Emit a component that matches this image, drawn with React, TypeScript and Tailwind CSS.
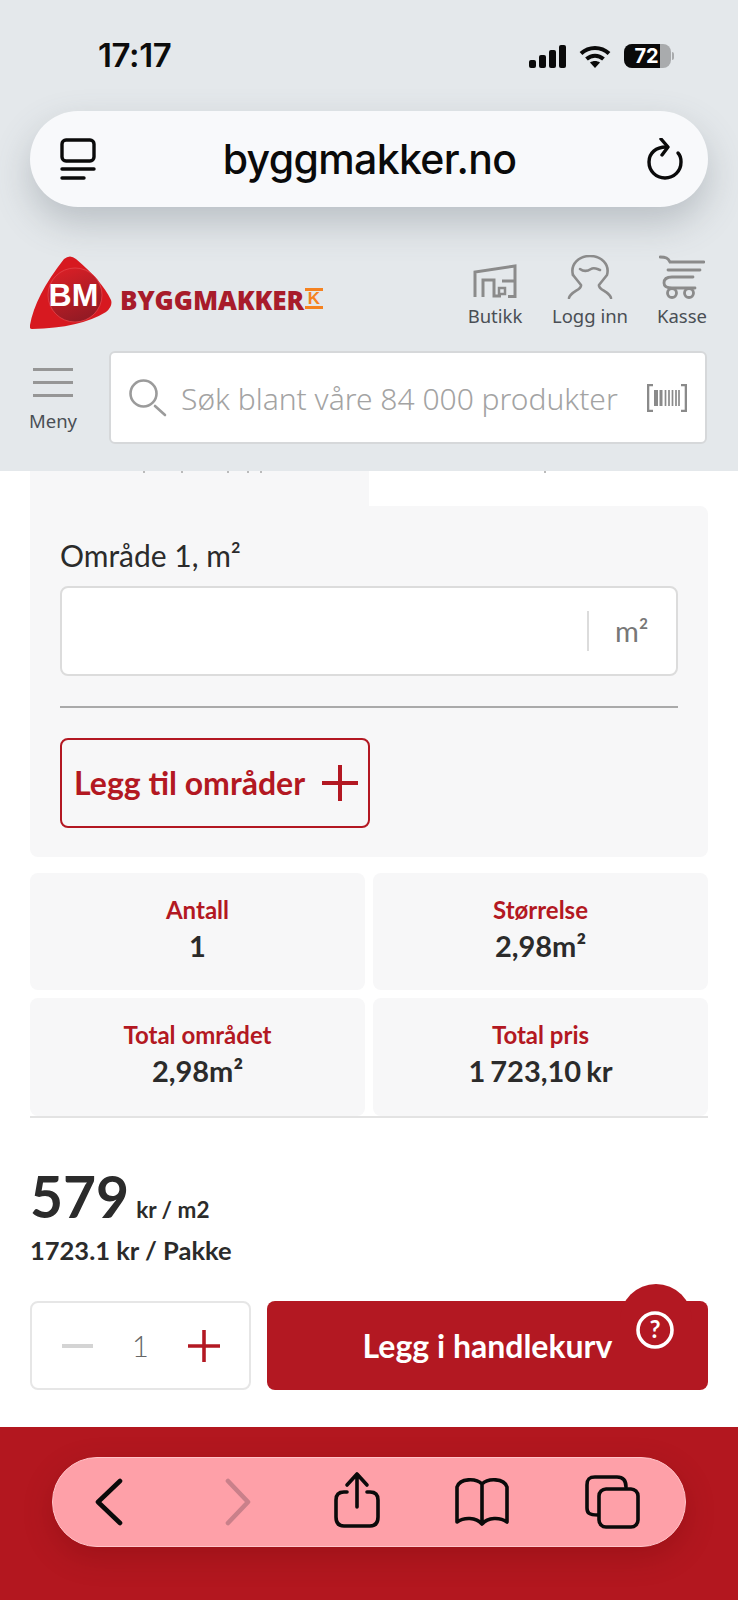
import { ReactNode } from "react"

const brand = "font-['Lato','Noto_Sans',sans-serif]"
const soft = "font-['Noto_Sans','Open_Sans',sans-serif]"

function Logo() {
  return (
    <svg width="84" height="74" viewBox="0 0 84 74" className="shrink-0">
      <defs>
        <linearGradient id="inner" x1="0.3" y1="0" x2="0.7" y2="1">
          <stop offset="0" stopColor="#d81f26" />
          <stop offset="1" stopColor="#8f1a24" />
        </linearGradient>
      </defs>
      <path d="M34 3 Q40 -2 46 3 Q72 25 81 44 Q83 50 76 56 Q50 72 2 73 Q-1 73 0 69 Q5 40 34 3 Z" fill="#d71920" />
      <circle cx="45" cy="39" r="27" fill="url(#inner)" stroke="#e2444a" strokeWidth="0.8" />
      <text x="43.5" y="50" textAnchor="middle" fill="#fff" fontFamily="Liberation Sans, sans-serif" fontWeight="700" fontSize="32">
        BM
      </text>
    </svg>
  )
}

function ShopIcon() {
  return (
    <svg width="44" height="36" viewBox="0 0 44 36" fill="none" stroke="#8b8b8b" strokeWidth="3">
      <path d="M2 34V9L42 3V33.5H35" />
      <path d="M10 34V17H21V33H28" />
      <path d="M29 18H41" />
      <rect x="26" y="25" width="6" height="6" strokeWidth="2.5" />
    </svg>
  )
}

function UserIcon() {
  return (
    <svg width="46" height="44" viewBox="0 0 46 44" fill="none" stroke="#8b8b8b" strokeWidth="2.6" strokeLinecap="round" strokeLinejoin="round">
      <path d="M6 20 C3 9 12 1 23 1 C34 1 43 9 40 20 L32 30 C31 35 42 36 44 43" />
      <path d="M6 20 L14 30 C15 35 4 36 2 43" />
      <path d="M13 14 C17 17 21 16 24 14 C27 12 30 14 33 15" />
    </svg>
  )
}

function CartIcon() {
  return (
    <svg width="46" height="44" viewBox="0 0 46 44" fill="none" stroke="#8b8b8b" strokeWidth="2.8" strokeLinecap="round">
      <path d="M1 2 C7 2 9 3 11 7 H45" />
      <path d="M9 15 H41" />
      <path d="M34 22 H13 C7 22 5 25 5 28 C5 31 8 33 13 33 H36" />
      <circle cx="13" cy="38" r="4.5" />
      <circle cx="30" cy="38" r="4.5" />
    </svg>
  )
}

function NavItem({ icon, label, className }: { icon: ReactNode; label: string; className: string }) {
  return (
    <div className={`flex flex-col items-center ${className}`}>
      <div className="h-[44px] flex items-end justify-center">{icon}</div>
      <span className={`mt-[4px] text-[18.5px] leading-[26px] text-[#4a4f55] whitespace-nowrap ${soft}`}>{label}</span>
    </div>
  )
}

function StatCard({ label, value }: { label: string; value: string }) {
  return (
    <div className={`bg-[#f7f7f8] rounded-lg flex flex-col items-center pt-[23px] ${brand}`}>
      <span className="text-[24px] leading-[28px] font-bold text-[#b31822]">{label}</span>
      <span className="mt-[3px] text-[29px] leading-[38px] font-bold text-[#2b2b2b] [word-spacing:-2px]">{value}</span>
    </div>
  )
}

function PlusIcon({ size }: { size: number }) {
  return (
    <svg width={size} height={size} viewBox="0 0 36 36" stroke="#b31822" strokeWidth="4">
      <path d="M0 18H36M18 0V36" />
    </svg>
  )
}

export default function App() {
  return (
    <div className="relative w-[738px] h-[1600px] bg-white overflow-hidden flex flex-col">
      {/* Browser chrome + site header */}
      <header className="relative z-10 h-[471px] shrink-0 bg-[#e4e8eb] flex flex-col">
        <div className="h-[111px] shrink-0 pl-[98px] pr-[64px] pt-[35px] flex items-start justify-between">
          <span className="text-[33px] leading-[40px] font-semibold text-[#0c0c0c] font-['Inter',sans-serif] tracking-[-0.4px]">17:17</span>
          <div className="flex items-center gap-[13px] pt-[9px]">
            <svg width="37" height="23" viewBox="0 0 37 23" fill="#0a0a0a">
              <rect x="0" y="15" width="7" height="8" rx="2" />
              <rect x="10" y="10" width="7" height="13" rx="2" />
              <rect x="20" y="5" width="7" height="18" rx="2" />
              <rect x="30" y="0" width="7" height="23" rx="2" />
            </svg>
            <svg width="32" height="23" viewBox="0 0 32 23" fill="none" stroke="#0a0a0a" strokeWidth="4">
              <path d="M2 8.5 C10 1 22 1 30 8.5" />
              <path d="M7.5 14 C12.5 9.5 19.5 9.5 24.5 14" />
              <path d="M16 23 L11 17.5 C14 15.5 18 15.5 21 17.5 Z" fill="#0a0a0a" stroke="none" />
            </svg>
            <div className="flex items-center gap-[1px]">
              <div className="relative w-[47px] h-[24px] rounded-[8px] bg-[#a9abad] overflow-hidden">
                <div className="w-[36px] h-full bg-[#0a0a0a]" />
                <span className="absolute inset-0 flex items-center justify-center pr-[2px] text-[20px] font-bold text-white font-['Inter',sans-serif]">72</span>
              </div>
              <div className="w-[2px] h-[8px] rounded-r bg-[#a9abad]" />
            </div>
          </div>
        </div>

        <div className="mx-[30px] h-[96px] shrink-0 rounded-[48px] bg-[#f8f9fb] shadow-[0_16px_36px_rgba(90,100,110,0.3)] flex items-center justify-between pl-[30px] pr-[25px]">
          <svg width="36" height="42" viewBox="0 0 36 42" fill="none" stroke="#0a0a0a" strokeWidth="3.4" strokeLinecap="round">
            <rect x="2" y="2" width="32" height="21" rx="4" />
            <path d="M2 31H34" />
            <path d="M2 40H24" />
          </svg>
          <span className="-ml-[4px] text-[41px] leading-[50px] text-[#0a0a0a] font-['Inter',sans-serif] font-medium tracking-[-0.65px]">byggmakker.no</span>
          <svg width="36" height="42" viewBox="0 0 36 42" fill="none" stroke="#0a0a0a" strokeWidth="3.4" strokeLinecap="round" strokeLinejoin="round">
            <path d="M19 9 C9 9 2 15 2 24 C2 33 9 40 18 40 C27 40 34 33 34 24 C34 20 33 17 31 15" />
            <path d="M14 1 L21 9 L15 17" />
          </svg>
        </div>

        <div className="mt-[49px] pl-[30px] pr-[31px] flex items-start">
          <Logo />
          <div className="ml-[6px] mt-[26px] flex items-start">
            <span className="text-[26px] leading-[36px] font-extrabold text-[#a81c2b] tracking-[-0.1px] font-['Open_Sans',sans-serif] whitespace-nowrap">BYGGMAKKER</span>
            <div className="ml-[1px] mt-[6px] w-[18px] h-[21px] border-y-[3px] border-[#f58220] flex items-center justify-center">
              <span className="text-[17px] leading-[15px] font-bold text-[#f58220] font-['Liberation_Sans',sans-serif]">K</span>
            </div>
          </div>
          <div className="flex-1" />
          <div className="flex items-start -mt-[1px]">
            <NavItem icon={<ShopIcon />} label="Butikk" className="w-[56px]" />
            <NavItem icon={<UserIcon />} label="Logg inn" className="w-[74px] ml-[30px]" />
            <NavItem icon={<CartIcon />} label="Kasse" className="w-[50px] ml-[30px]" />
          </div>
        </div>

        <div className="mt-[21px] pl-[30px] pr-[31px] flex items-start">
          <div className="w-[46px] pt-[17px] flex flex-col items-center">
            <div className="w-[40px] flex flex-col gap-[10.5px]">
              <div className="h-[2.5px] bg-[#969696]" />
              <div className="h-[2.5px] bg-[#969696]" />
              <div className="h-[2.5px] bg-[#969696]" />
            </div>
            <span className={`mt-[11px] text-[18.5px] leading-[26px] text-[#4a4f55] ${soft}`}>Meny</span>
          </div>
          <div className="ml-[33px] flex-1 h-[93px] rounded-[6px] bg-white border-2 border-[#d6d8da] flex items-center pl-[18px] pr-[18px]">
            <svg width="38" height="38" viewBox="0 0 38 38" fill="none" stroke="#9b9b9b" strokeWidth="2.6" strokeLinecap="round">
              <circle cx="14.5" cy="14.5" r="13" />
              <path d="M26 27 L36 36" />
            </svg>
            <span className={`ml-[14px] pt-[2px] flex-1 text-[30px] leading-[40px] font-light text-[#a3a3a3] whitespace-nowrap ${soft}`}>Søk blant våre 84 000 produkter</span>
            <svg width="40" height="28" viewBox="0 0 40 28" fill="none" stroke="#8a8a8a">
              <path d="M6 1H1V27H6M34 1H39V27H34" strokeWidth="2.6" />
              <path d="M9 6V22" strokeWidth="4" />
              <path d="M14 6V22" strokeWidth="3" />
              <path d="M18.5 6V22M22 6V22M25.5 6V22M29 6V22M32 6V22" strokeWidth="1.7" />
            </svg>
          </div>
        </div>
      </header>

      {/* Calculator, scrolled up behind the header */}
      <main className="flex-1 flex flex-col">
        <div className="relative mx-[30px] w-[339px] h-[35px] shrink-0 bg-[#f7f7f8]">
          {/* descenders of the tab labels poking out below the header */}
          <span className="absolute left-[113px] top-0 w-[2px] h-[2px] bg-[#bbb]" />
          <span className="absolute left-[151px] top-0 w-[2px] h-[2px] bg-[#bbb]" />
          <span className="absolute left-[197px] top-0 w-[2px] h-[2px] bg-[#bbb]" />
          <span className="absolute left-[217px] top-0 w-[2px] h-[2px] bg-[#bbb]" />
          <span className="absolute left-[230px] top-0 w-[2px] h-[2px] bg-[#bbb]" />
          <span className="absolute left-[514px] top-0 w-[2px] h-[2px] bg-[#bbb]" />
        </div>
        <section className="mx-[30px] h-[351px] shrink-0 rounded-b-lg rounded-tr-lg bg-[#f7f7f8] px-[30px] pt-[30px]">
          <label className={`block text-[30px] leading-[38px] text-[#2b2b2b] ${brand}`}>Område 1, m²</label>
          <div className="mt-[12px] h-[90px] rounded-lg bg-white border-2 border-[#dcdcdc] flex items-center justify-end">
            <div className="w-[2px] h-[40px] bg-[#dcdcdc]" />
            <span className={`w-[87px] pl-[26px] text-[29px] leading-[36px] text-[#777] ${brand}`}>m²</span>
          </div>
          <div className="mt-[30px] h-[2px] bg-[#aaa]" />
          <button className={`mt-[30px] w-[310px] h-[90px] rounded-lg border-2 border-[#b31822] pl-[12px] flex items-center text-[32px] font-bold text-[#b31822] ${brand}`}>
            <span className="w-[248px] text-left whitespace-nowrap">Legg til områder</span>
            <PlusIcon size={36} />
          </button>
        </section>

        <div className="mx-[30px] mt-[16px] grid grid-cols-2 grid-rows-[117px_118px] gap-x-[8px] gap-y-[8px] shrink-0">
          <StatCard label="Antall" value="1" />
          <StatCard label="Størrelse" value="2,98m²" />
          <StatCard label="Total området" value="2,98m²" />
          <StatCard label="Total pris" value="1 723,10 kr" />
        </div>
        <div className="mx-[30px] h-[2px] bg-[#e3e3e3] shrink-0" />

        <div className={`px-[30px] pt-[42px] shrink-0 ${brand}`}>
          <div className="flex items-baseline">
            <span className="text-[57px] leading-[72px] font-bold text-[#2b2b2b]">579</span>
            <span className="ml-[7px] text-[22.5px] font-bold text-[#2b2b2b]">kr / m2</span>
          </div>
          <div className="mt-[2px] text-[25.5px] leading-[32px] font-bold text-[#2b2b2b]">1723.1 kr / Pakke</div>
        </div>

        <div className="mt-[35px] px-[30px] flex gap-[16px] shrink-0">
          <div className="w-[221px] h-[89px] rounded-lg border-2 border-[#e6e6e6] flex items-center pl-[30px] pr-[29px] justify-between">
            <div className="w-[31px] h-[4px] bg-[#d4d4d4]" />
            <span className={`text-[29px] text-[#666] font-light ${brand}`}>1</span>
            <PlusIcon size={32} />
          </div>
          <button className={`relative flex-1 h-[89px] rounded-lg bg-[#b31822] text-[32px] font-bold text-white ${brand}`}>
            <span className="absolute left-[353px] -top-[17px] w-[72px] h-[40px] rounded-t-full bg-[#b31822]" />
            <span className="relative">Legg i handlekurv</span>
            <svg width="38" height="38" viewBox="0 0 38 38" fill="none" className="absolute left-[369px] top-[10px]">
              <circle cx="19" cy="19" r="17" stroke="#fff" strokeWidth="3.6" />
              <text x="19" y="27" textAnchor="middle" fill="#fff" fontFamily="Lato, sans-serif" fontWeight="700" fontSize="24">?</text>
            </svg>
          </button>
        </div>
      </main>

      {/* Safari bottom toolbar */}
      <footer className="h-[173px] shrink-0 bg-[#b3171f] pt-[30px] px-[52px]">
        <div className="h-[90px] rounded-[45px] bg-[#fea0a8] border border-[#ffc4c9] shadow-[0_10px_30px_rgba(80,0,5,0.22)] relative">
          <svg width="633" height="90" viewBox="0 0 633 90" fill="none" stroke="#0a0a0a" strokeWidth="4" strokeLinecap="round" strokeLinejoin="round" className="absolute -left-px -top-px">
            <path d="M68 24 L46 45 L68 66" strokeWidth="4.6" />
            <path d="M176 24 L196 45 L176 66" stroke="#c9808a" strokeWidth="4.6" />
            <path d="M295 35 H292 C286 35 284 38 284 43 V60 C284 66 287 69 292 69 H318 C323 69 326 66 326 60 V43 C326 38 324 35 318 35 H315" strokeWidth="3.6" />
            <path d="M305 50 V17 M295 28 L305 17 L315 28" strokeWidth="3.6" />
            <path d="M430 27 C424 21 408 21 405 30 V65 C412 60 424 60 430 67 C436 60 448 60 455 65 V30 C452 21 436 21 430 27 V65" strokeWidth="3.6" />
            <path d="M546 58 C537 58 535 56 535 51 V28 C535 22 537 20 543 20 H565 C571 20 574 23 574 30" strokeWidth="3.6" />
            <rect x="547" y="32" width="39" height="38" rx="7" strokeWidth="3.6" />
          </svg>
        </div>
      </footer>
    </div>
  )
}
